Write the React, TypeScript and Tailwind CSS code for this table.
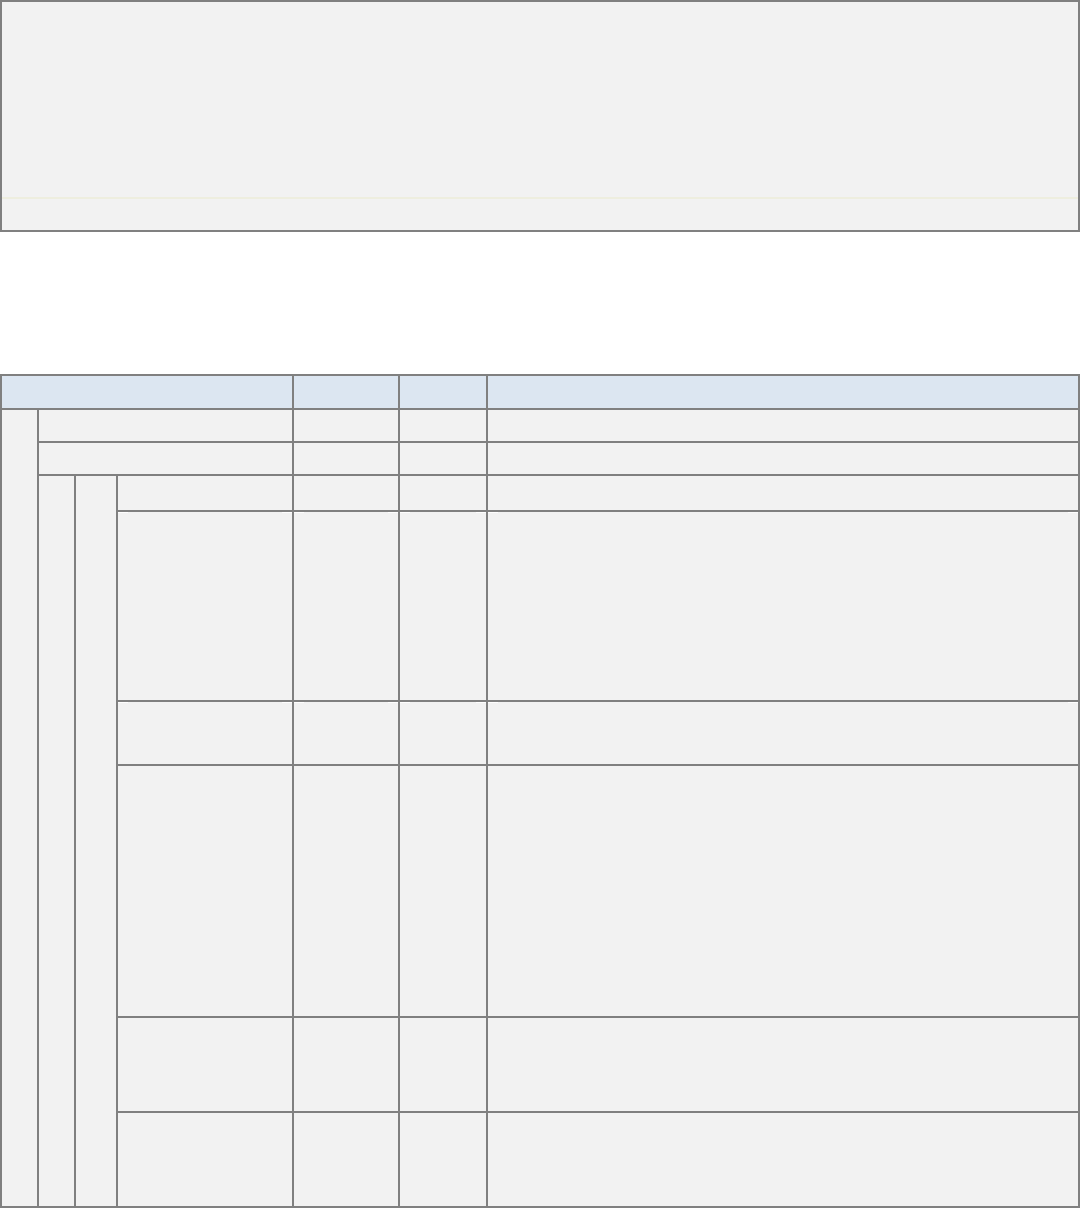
import React from "react";

const Cell = ({ className = "", marks = false }: { className?: string; marks?: boolean }) => (
  <div className={`bg-[#f2f2f2] flex flex-col ${className}`}>
    {marks && (
      <div className="flex justify-between h-[1px]">
        <div className="w-[10px] bg-white" />
        <div className="w-[10px] bg-white" />
      </div>
    )}
  </div>
);

const H = ({ className = "" }: { className?: string }) => <div className={`bg-[#dce6f1] ${className}`} />;

export default function App() {
  const tall = [false, true, true, false, false, false];
  return (
    <div className="w-[1080px] bg-white font-['Liberation_Sans',sans-serif]">
      <div className="h-[232px] border-2 border-[#808080] bg-[#f2f2f2] flex flex-col">
        <div className="h-[195px]" />
        <div className="h-[2px] bg-[#eeeedf]" />
        <div className="flex-1" />
      </div>
      <div className="mt-[142px] grid grid-cols-[35px_35px_40px_174px_104px_86px_590px] grid-rows-[32px_31px_31px_34px_188px_62px_250px_93px_93px] gap-[2px] p-[2px] bg-[#808080]">
        <H className="col-span-4" />
        <H />
        <H />
        <H />
        <Cell className="row-span-8" />
        <Cell className="col-span-3" />
        <Cell />
        <Cell />
        <Cell />
        <Cell className="col-span-3" />
        <Cell />
        <Cell />
        <Cell />
        <Cell className="row-span-6" />
        <Cell className="row-span-6" />
        {tall.map((m, i) => (
          <React.Fragment key={i}>
            <Cell marks={m} />
            <Cell marks={m} />
            <Cell marks={m} />
            <Cell marks={m} />
          </React.Fragment>
        ))}
      </div>
    </div>
  );
}
